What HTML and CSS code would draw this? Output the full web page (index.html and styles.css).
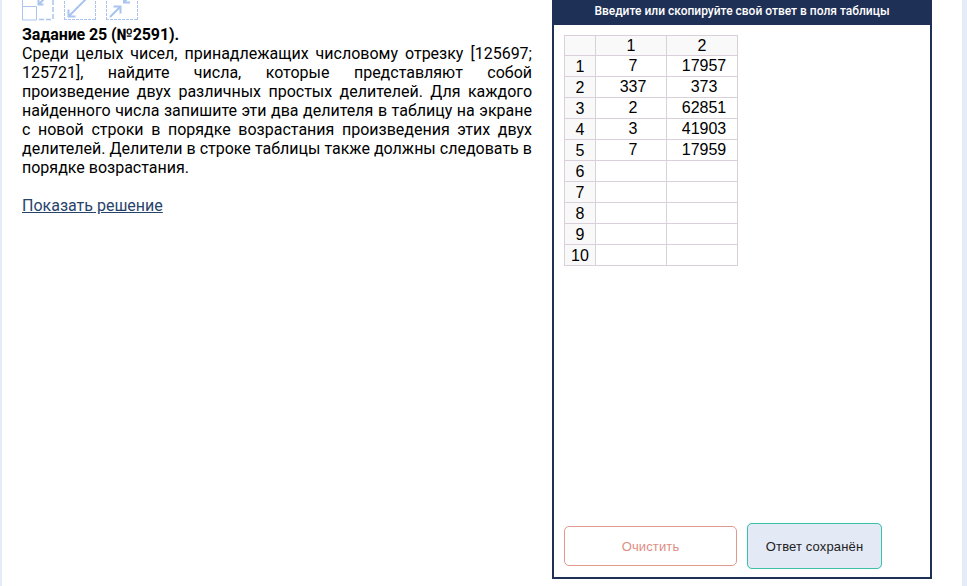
FILE: index.html
```
<!DOCTYPE html>
<html lang="ru">
<head>
<meta charset="utf-8">
<title>Задание 25</title>
<link rel="stylesheet" href="styles.css">
</head>
<body>
<main class="page">
  <section class="task">
    <div class="tools">
      <svg class="tool" viewBox="0 0 32 32"><path class="thin" d="M.5 17.500h14v13.500H.5zM.5 9v8"/><path class="dash" d="M17 30.500h14M31 30V0"/><path class="arrow" d="M23 9l-6.500 6.500M16.500 10.500v5h5"/></svg>
      <svg class="tool" viewBox="0 0 32 32"><path class="dots" d="M.5 0v31M0 30.500h32M31.500 31V0"/><path class="arrow" d="M25 7L4.500 27.500M4.500 20.500v7h7"/></svg>
      <svg class="tool" viewBox="0 0 32 32"><path class="dots" d="M.5 0v31M0 30.500h32M31.500 31V0"/><path class="arrow" d="M4 28l10.500-10.500M7.500 17.500h7v7M24 7l-6 6M18 7v6.500h6"/></svg>
    </div>
    <h1 class="title">Задание 25 (№2591).</h1>
    <p class="text">Среди целых чисел, принадлежащих числовому отрезку [125697; 125721], найдите числа, которые представляют собой произведение двух различных простых делителей. Для каждого найденного числа запишите эти два делителя в таблицу на экране с новой строки в порядке возрастания произведения этих двух делителей. Делители в строке таблицы также должны следовать в порядке возрастания.</p>
    <a class="solution" href="#">Показать решение</a>
  </section>
  <section class="answer">
    <header class="answer-head">Введите или скопируйте свой ответ в поля таблицы</header>
    <table class="grid">
      <thead><tr><th></th><th>1</th><th>2</th></tr></thead>
      <tbody>
        <tr><th>1</th><td>7</td><td>17957</td></tr>
        <tr><th>2</th><td>337</td><td>373</td></tr>
        <tr><th>3</th><td>2</td><td>62851</td></tr>
        <tr><th>4</th><td>3</td><td>41903</td></tr>
        <tr><th>5</th><td>7</td><td>17959</td></tr>
        <tr><th>6</th><td></td><td></td></tr>
        <tr><th>7</th><td></td><td></td></tr>
        <tr><th>8</th><td></td><td></td></tr>
        <tr><th>9</th><td></td><td></td></tr>
        <tr><th>10</th><td></td><td></td></tr>
      </tbody>
    </table>
    <footer class="actions">
      <button class="btn clear">Очистить</button>
      <button class="btn saved">Ответ сохранён</button>
    </footer>
  </section>
</main>
</body>
</html>
```
FILE: styles.css
```
* { box-sizing: border-box; }
body { margin: 0; background: #e6ebf8; font-family: Roboto, sans-serif; font-size: 16px; color: #000; }
.page { height: 586px; margin: 0 5px 0 2px; padding-left: 20px; background: #fff; display: flex; gap: 20px; overflow: hidden; }
.task { width: 510px; }
.tools { display: flex; gap: 10px; height: 21px; align-items: flex-end; overflow: hidden; }
.tool { width: 32px; height: 32px; flex: none; fill: none; stroke: #a9c4ee; }
.thin { stroke-width: 1; }
.dash { stroke-width: 1.500; stroke-dasharray: 5 2; }
.dots { stroke-width: 1; stroke-dasharray: 3 1; }
.arrow { stroke-width: 2; }
.title { margin: 4px 0 0; font-size: 16px; line-height: 19px; letter-spacing: -.1px; }
.text { margin: 0 0 19px; line-height: 19px; text-align: justify; }
.solution { color: #28436b; line-height: 19px; text-decoration: underline; }
.answer { width: 380px; height: 579px; border: 2px solid #1f3057; border-top: 0; display: flex; flex-direction: column; }
.answer-head { height: 25px; padding-top: 2px; background: #1f3057; color: #fff; font-size: 12px; font-weight: 500; line-height: 18px; text-align: center; }
.grid { margin: 10px 0 0 10px; width: 174px; border-collapse: collapse; table-layout: fixed; font-family: "Liberation Sans", sans-serif; font-size: 16px; }
.grid th, .grid td { height: 21px; padding: 0; border: 1px solid #d9d0d9; text-align: center; font-weight: 400; line-height: 18px; }
.grid td { padding: 0 0 1px 4px; }
.grid tbody th { padding-top: 2px; }
.grid th { background: #f9f9f9; }
.grid thead th { height: 20px; }
.grid thead th:first-child { width: 31px; }
.actions { margin: auto 0 8px 10px; display: flex; align-items: center; gap: 10px; }
.btn { padding: 0; border-radius: 5px; font-family: "Liberation Sans", sans-serif; font-size: 13px; letter-spacing: .14px; }
.clear { width: 173px; height: 40px; border: 1px solid #df9a90; background: #fff; color: #e08d82; }
.saved { width: 135px; height: 46px; border: 1px solid #3cc0aa; background: #e3e9f5; color: #222; box-shadow: 0 0 1px #b5f0e6; }
```
